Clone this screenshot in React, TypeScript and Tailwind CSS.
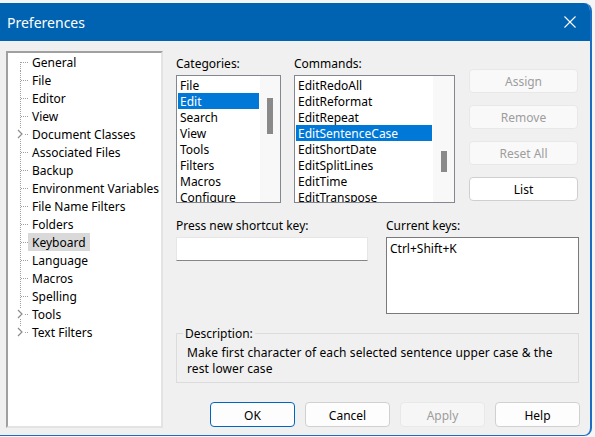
import React from 'react';

const font = { fontFamily: '"Noto Sans", "Liberation Sans", sans-serif' };

const treeItems = [
    { label: 'General' },
    { label: 'File' },
    { label: 'Editor' },
    { label: 'View' },
    { label: 'Document Classes', branch: true },
    { label: 'Associated Files' },
    { label: 'Backup' },
    { label: 'Environment Variables' },
    { label: 'File Name Filters' },
    { label: 'Folders' },
    { label: 'Keyboard', selected: true },
    { label: 'Language' },
    { label: 'Macros' },
    { label: 'Spelling' },
    { label: 'Tools', branch: true },
    { label: 'Text Filters', branch: true },
];

const categories = ['File', 'Edit', 'Search', 'View', 'Tools', 'Filters', 'Macros', 'Configure'];
const commands = [
    'EditRedoAll', 'EditReformat', 'EditRepeat', 'EditSentenceCase',
    'EditShortDate', 'EditSplitLines', 'EditTime', 'EditTranspose',
];

function TreeGutter({ first, last, branch }: { first: boolean; last: boolean; branch?: boolean }) {
    const dot = { stroke: '#a0a0a0', strokeWidth: 1, strokeDasharray: '1 1', shapeRendering: 'crispEdges' as const };
    return (
        <svg width="20" height="18" viewBox="0 0 20 18" className="shrink-0">
            {branch ? (
                <>
                    <line x1="12.5" y1="0" x2="12.5" y2="4" {...dot} />
                    {!last && <line x1="12.5" y1="14" x2="12.5" y2="18" {...dot} />}
                    <polyline points="10,5 14,9 10,13" fill="none" stroke="#8c8c8c" strokeWidth="1.2" />
                    <line x1="17" y1="9.5" x2="20" y2="9.5" {...dot} />
                </>
            ) : (
                <>
                    <line x1="12.5" y1={first ? 9 : 0} x2="12.5" y2="18" {...dot} />
                    <line x1="13" y1="9.5" x2="20" y2="9.5" {...dot} />
                </>
            )}
        </svg>
    );
}

function ListBox({ items, selected, width, itemsWidth, thumbTop, thumbHeight }: {
    items: string[]; selected: number; width: string; itemsWidth: string; thumbTop: string; thumbHeight: string;
}) {
    return (
        <div className={`${width} mt-[4px] h-[128px] border border-[#828790] bg-white flex overflow-hidden`}>
            <div className={`${itemsWidth} pt-[1px] px-[1px]`}>
                {items.map((it, i) => (
                    <div
                        key={it}
                        className={`h-[16px] leading-[18px] pl-[2px] text-[12px] whitespace-nowrap ${i === selected ? 'bg-[#0078d7] text-white' : 'text-black'}`}
                    >
                        {it}
                    </div>
                ))}
            </div>
            <div className="flex-1 bg-[#f8f8f8] flex justify-center">
                <div className={`w-[6px] bg-[#8a8a8a] ${thumbTop} ${thumbHeight}`} />
            </div>
        </div>
    );
}

function SideButton({ label, disabled }: { label: string; disabled?: boolean }) {
    return (
        <button
            className={`w-[109px] h-[24px] pt-[2px] rounded-[4px] border text-[12px] ${disabled ? 'bg-[#f9f9f9] border-[#e8e8e8] text-[#9d9d9d]' : 'bg-white border-[#cfcfcf] text-black'}`}
        >
            {label}
        </button>
    );
}

function FooterButton({ label, disabled, primary }: { label: string; disabled?: boolean; primary?: boolean }) {
    return (
        <button
            className={`w-[85px] h-[25px] pt-[2px] rounded-[4px] border text-[12px] ${
                disabled
                    ? 'bg-[#f6f6f6] border-[#e8e8e8] text-[#9d9d9d]'
                    : primary
                    ? 'bg-[#fdfdfd] border-[#0067c0] text-black'
                    : 'bg-[#fdfdfd] border-[#d0d0d0] text-black'
            }`}
        >
            {label}
        </button>
    );
}

export default function App() {
    return (
        <div className="w-[595px] h-[437px] bg-[#f5f5f5] overflow-hidden" style={font}>
            <div className="mt-[3px] w-[592px] h-[433px] bg-[#f0f0f0] rounded-tr-[8px] rounded-br-[8px] border-r-2 border-b border-[#1b6ec2] overflow-hidden flex flex-col">
                {/* Title bar */}
                <div className="h-[38px] bg-[#0063b1] flex items-center justify-between pl-[7px] pr-[14px] shrink-0">
                    <span className="text-white text-[14px] pt-[1px]">Preferences</span>
                    <svg width="12" height="12" viewBox="0 0 12 12">
                        <path d="M0.5 0.5 L11.5 11.5 M11.5 0.5 L0.5 11.5" stroke="white" strokeWidth="1.1" />
                    </svg>
                </div>

                {/* Body */}
                <div className="flex pl-[6px] pt-[10px]">
                    {/* Tree */}
                    <div className="w-[157px] h-[377px] bg-white border-2 border-t-[#a0a0a0] border-l-[#a0a0a0] border-r-[#e3e3e3] border-b-[#e3e3e3] overflow-hidden">
                        {treeItems.map((item, i) => (
                            <div key={item.label} className="flex h-[18px] items-start">
                                <TreeGutter first={i === 0} last={i === treeItems.length - 1} branch={item.branch} />
                                <span
                                    className={`px-[4px] h-[18px] leading-[20px] text-[12px] text-black whitespace-nowrap ${item.selected ? 'bg-[#d9d9d9]' : ''}`}
                                >
                                    {item.label}
                                </span>
                            </div>
                        ))}
                    </div>

                    {/* Keyboard page */}
                    <div className="ml-[13px] w-[404px] flex flex-col">
                        <div className="flex items-start">
                            <div className="w-[105px]">
                                <div className="mt-[4px] h-[16px] leading-[18px] text-[12px] text-black">Categories:</div>
                                <ListBox items={categories} selected={1} width="w-[105px]" itemsWidth="w-[83px]" thumbTop="mt-[22px]" thumbHeight="h-[36px]" />
                            </div>
                            <div className="ml-[13px] w-[161px]">
                                <div className="mt-[4px] h-[16px] leading-[18px] text-[12px] text-black">Commands:</div>
                                <ListBox items={commands} selected={3} width="w-[161px]" itemsWidth="w-[138px]" thumbTop="mt-[75px]" thumbHeight="h-[21px]" />
                            </div>
                            <div className="ml-[14px] mt-[18px] flex flex-col gap-[12px]">
                                <SideButton label="Assign" disabled />
                                <SideButton label="Remove" disabled />
                                <SideButton label="Reset All" disabled />
                                <SideButton label="List" />
                            </div>
                        </div>

                        <div className="flex mt-[14px]">
                            <div className="w-[192px]">
                                <div className="h-[16px] leading-[18px] text-[12px] text-black">Press new shortcut key:</div>
                                <div className="mt-[4px] h-[24px] bg-white border border-[#e6e6e6] border-b-[#868686]" />
                            </div>
                            <div className="ml-[18px] w-[193px]">
                                <div className="h-[16px] leading-[18px] text-[12px] text-black">Current keys:</div>
                                <div className="mt-[4px] h-[77px] bg-white border border-[#7a7a7a] pl-[3px] pt-[3px] text-[12px] leading-[16px] text-black">
                                    Ctrl+Shift+K
                                </div>
                            </div>
                        </div>

                        <fieldset className="mt-[11px] w-[403px] border border-[#dcdcdc] pl-[6px] pb-[5px]">
                            <legend className="px-[2px] h-[16px] leading-[18px] text-[12px] text-black">Description:</legend>
                            <p className="pt-[4px] pl-[4px] text-[12px] leading-[16px] tracking-[0.1px] text-black whitespace-nowrap">
                                Make first character of each selected sentence upper case &amp; the
                                <br />
                                rest lower case
                            </p>
                        </fieldset>

                        <div className="mt-[19px] flex justify-end gap-[10px]">
                            <FooterButton label="OK" primary />
                            <FooterButton label="Cancel" />
                            <FooterButton label="Apply" disabled />
                            <FooterButton label="Help" />
                        </div>
                    </div>
                </div>
            </div>
        </div>
    );
}
